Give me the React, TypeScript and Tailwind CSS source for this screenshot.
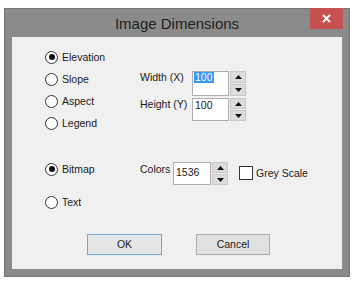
import React from 'react';

const font = { fontFamily: '"Liberation Sans", Arial, sans-serif' };

const Radio: React.FC<{ label: string; checked?: boolean }> = ({ label, checked }) => (
  <div className="flex items-center h-[22px] gap-[4px]">
    <span className="w-[13px] h-[13px] rounded-full border border-[#333333] bg-white flex items-center justify-center">
      {checked && <span className="w-[6px] h-[6px] rounded-full bg-[#111111]" />}
    </span>
    <span className="text-[10.5px] leading-[13px] text-[#1a1a1a]">{label}</span>
  </div>
);

const Arrow: React.FC<{ up?: boolean }> = ({ up }) => (
  <svg width="7" height="4" viewBox="0 0 7 4">
    {up ? <polygon points="0,4 7,4 3.5,0" fill="#111" /> : <polygon points="0,0 7,0 3.5,4" fill="#111" />}
  </svg>
);

const Spinner: React.FC = () => (
  <div className="w-[16px] flex flex-col gap-[1px] ml-[1px]">
    <div className="flex-1 bg-[#dcdcdc] border border-[#c8c8c8] flex items-center justify-center">
      <Arrow up />
    </div>
    <div className="flex-1 bg-[#dcdcdc] border border-[#c8c8c8] flex items-center justify-center">
      <Arrow />
    </div>
  </div>
);

const NumberBox: React.FC<{
  value: string;
  width: string;
  height: string;
  pad: string;
  selected?: boolean;
}> = ({ value, width, height, pad, selected }) => (
  <div className={`flex ${height}`}>
    <div className={`${width} h-full bg-white border border-[#abadb3] pl-[1px] flex items-start ${pad}`}>
      <span
        className={`text-[10.5px] leading-[11px] block px-[1px] ${
          selected ? 'bg-[#3399ff] text-white' : 'text-[#1a1a1a]'
        }`}
      >
        {value}
      </span>
    </div>
    <Spinner />
  </div>
);

const App: React.FC = () => {
  return (
    <div className="min-h-screen bg-white pt-[8px] pl-[4px]" style={font}>
      <div className="w-[346px] h-[269px] bg-[#8b8b8b] border border-[#747474] flex flex-col">
        {/* Title bar */}
        <div className="relative h-[28px] flex items-center justify-center">
          <span className="text-[15px] leading-[18px] text-[#1e1e1e] mt-[1px]">Image Dimensions</span>
          <button
            type="button"
            className="absolute right-[6px] top-[-1px] w-[33px] h-[21px] bg-[#c75050] flex items-center justify-center"
          >
            <svg width="9" height="9" viewBox="0 0 9 9">
              <path d="M1 1 L8 8 M8 1 L1 8" stroke="#fff" strokeWidth="1.8" />
            </svg>
          </button>
        </div>

        {/* Client area */}
        <div className="mx-[7px] mb-[7px] flex-1 bg-[#f0f0f0] flex flex-col">
          <div className="flex">
            <div className="w-[128px] pl-[33px] pt-[9px] flex flex-col">
              <Radio label="Elevation" checked />
              <Radio label="Slope" />
              <Radio label="Aspect" />
              <Radio label="Legend" />
            </div>
            <div className="pt-[34px] flex flex-col gap-[2px]">
              <div className="flex items-start">
                <span className="w-[52px] text-[10.5px] leading-[13px] text-[#1a1a1a]">Width (X)</span>
                <NumberBox value="100" width="w-[37px]" height="h-[25px]" pad="pt-0" selected />
              </div>
              <div className="flex items-start">
                <span className="w-[52px] text-[10.5px] leading-[13px] text-[#1a1a1a]">Height (Y)</span>
                <NumberBox value="100" width="w-[37px]" height="h-[23px]" pad="pt-[1px]" />
              </div>
            </div>
          </div>

          <div className="flex mt-[24px]">
            <div className="w-[128px] pl-[33px] flex flex-col gap-[11px]">
              <Radio label="Bitmap" checked />
              <Radio label="Text" />
            </div>
            <div className="flex items-start pt-[4px]">
              <span className="w-[33px] pt-[1px] text-[10.5px] leading-[13px] text-[#1a1a1a]">Colors</span>
              <NumberBox value="1536" width="w-[38px]" height="h-[23px]" pad="pt-[4px]" />
              <div className="flex items-center ml-[11px] mt-[4px] gap-[3px]">
                <span className="w-[14px] h-[14px] bg-white border border-[#333333]" />
                <span className="text-[10.5px] leading-[13px] text-[#1a1a1a]">Grey Scale</span>
              </div>
            </div>
          </div>

          <div className="flex pl-[75px] gap-[34px] mt-[21px]">
            <button
              type="button"
              className="w-[75px] h-[21px] bg-[#e5e5e5] border border-[#6fa6dc] text-[10.5px] text-[#1a1a1a]"
            >
              OK
            </button>
            <button
              type="button"
              className="w-[74px] h-[21px] bg-[#e1e1e1] border border-[#adadad] text-[10.5px] text-[#1a1a1a]"
            >
              Cancel
            </button>
          </div>
        </div>
      </div>
    </div>
  );
};

export default App;
